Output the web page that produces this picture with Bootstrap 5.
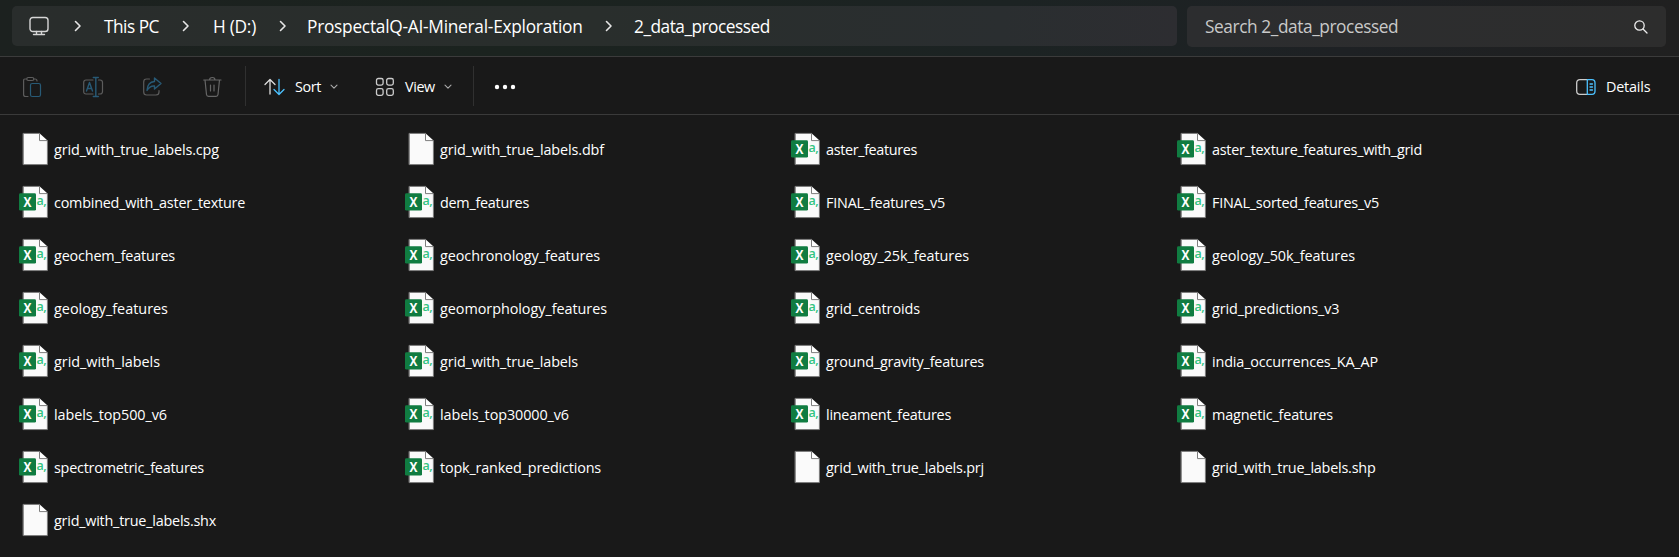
<!DOCTYPE html>
<html lang="en">
<head>
<meta charset="utf-8">
<title>2_data_processed</title>
<link href="https://cdn.jsdelivr.net/npm/bootstrap@5.3.0/dist/css/bootstrap.min.css" rel="stylesheet">
<style>
body{background:#191919;color:#fff;font-family:"Open Sans","Noto Sans",sans-serif;font-size:14px;line-height:20px;width:1679px;height:557px;overflow:hidden}
svg{display:block;flex:none;fill:none;stroke-linecap:round;stroke-linejoin:round}
.top-strip{height:57px;padding:6px 13px 0 12px;gap:10px;background:linear-gradient(90deg,#1c211f 0,#1b231f 30%,#1c2323 60%,#1e2124 80%,#202020 100%);border-bottom:1px solid #3b3b3b}
.address{width:1165px;height:40px;border-radius:5px;padding-left:17px;background:linear-gradient(90deg,#292d2c,#292e2c 50%,#2a2e30 85%,#2d2d31);display:grid;grid-template-columns:45px 30px 78px 31px 66px 28px 298px 29px auto;align-items:center;justify-content:start;font-size:17.3px;white-space:nowrap;letter-spacing:-.25px}
.address span{padding-top:1px}
.address .short-name{letter-spacing:-.5px}
.search-box{height:41px;border-radius:5px;padding:0 18px;background:linear-gradient(90deg,#2c2d2f,#2d2d2d);font-size:17.3px;color:#c9c9c9;letter-spacing:-.42px}
.tools{height:58px;border-bottom:1px solid #3a3a3a;font-size:14.4px;letter-spacing:-.4px}
.tools span{padding-top:3px}
.tools svg{margin-top:2px}
.tool-slot{width:60px;padding-left:23px}
.rule-v{width:1px;height:40px;background:#303030}
.files{display:grid;grid-template-columns:repeat(4,386px);grid-auto-rows:53px;padding:8px 0 0 18px}
.files svg{margin-top:-2px}
.file-name{margin-left:6px;font-size:14.4px;white-space:nowrap}
</style>
</head>
<body>
<svg width="0" height="0" class="position-absolute">
<symbol id="blank" viewBox="0 0 30 34"><path d="M5.4 1.4H21.5L29.4 9V32.6H5.4Z" fill="#fafafa" stroke="#7d7d7d" stroke-width=".9"/><path d="M21.5 1.4V8.6H29.4" fill="#fff" stroke="#7d7d7d"/></symbol>
<symbol id="chev" viewBox="0 0 8 12"><path d="M1.5 1.5 6 6 1.5 10.5" stroke="#e6e6e6" stroke-width="1.6"/></symbol>
<symbol id="down" viewBox="0 0 8 6"><path d="M1 1.2 4 4.2 7 1.2" stroke="#aaa" stroke-width="1.1"/></symbol>
</svg>
<header class="top-strip d-flex">
<nav class="address">
<svg width="20" height="20" viewBox="0 0 20 20" stroke="#d6d6d6" stroke-width="1.4"><rect x="1" y="1.5" width="18" height="14" rx="2.8"/><path d="M7.5 15.5V18M12.5 15.5V18M4.5 18.5H15.5"/></svg>
<svg width="8" height="12"><use href="#chev"/></svg><span class="short-name">This PC</span>
<svg width="8" height="12"><use href="#chev"/></svg><span>H (D:)</span>
<svg width="8" height="12"><use href="#chev"/></svg><span>ProspectalQ-AI-Mineral-Exploration</span>
<svg width="8" height="12"><use href="#chev"/></svg><span class="short-name">2_data_processed</span>
</nav>
<div class="search-box flex-grow-1 d-flex align-items-center justify-content-between"><span>Search 2_data_processed</span>
<svg width="14" height="14" viewBox="0 0 14 14" stroke="#eee" stroke-width="1.3"><circle cx="5.5" cy="5.5" r="4.7"/><path d="M9 9 13 13"/></svg></div>
</header>
<div class="tools d-flex align-items-center">
<div class="tool-slot"><svg width="20" height="22" viewBox="1 0 20 22" stroke="#5c5c5c" stroke-width="1.2"><path d="M4.5 3H2.8Q1.6 3 1.6 4.8V18.5Q1.6 20.5 3.5 20.5H6M11.5 3H13Q15 3 15 5"/><rect x="4.8" y="1.5" width="7" height="3" rx="1.5"/><rect x="8.5" y="7.5" width="10" height="13" rx="1.8" stroke="#285a76"/></svg></div>
<div class="tool-slot"><svg width="22" height="22" viewBox="1.5 0 22 22" stroke="#5c5c5c" stroke-width="1.2"><path d="M11.5 18H4.5Q2.2 18 2.2 15.5V6.5Q2.2 4 4.5 4H11.5M17 4H18.5Q21 4 21 6.5V15.5Q21 18 18.5 18H17"/><path d="M5 15 8 6.5 11 15M6 12.5H10M14.3 1.5V20.5M11.8 1.5H16.8M11.8 20.5H16.8" stroke="#285a76" stroke-width="1.4"/></svg></div>
<div class="tool-slot"><svg width="20" height="20" viewBox="0.5 0 20 20" stroke="#5c5c5c" stroke-width="1.2"><path d="M7 2H4Q1.2 2 1.2 5V15Q1.2 18 4 18H13.5Q16.5 18 16.5 15V13.5"/><path d="M12 1 18.5 6.5 12 12V9Q7.5 8.5 4.5 13.5Q5 5 12 4.5Z" stroke="#285a76" stroke-width="1.4"/></svg></div>
<div class="tool-slot"><svg width="20" height="22" viewBox="0.5 0 20 22" stroke="#666" stroke-width="1.2"><path d="M1.2 4H18.5M7 4Q7 1.5 9.8 1.5Q12.5 1.5 12.5 4M2.5 4 4 18.5Q4.2 20.3 6 20.3H13.5Q15.3 20.3 15.5 18.5L17 4M8 9V15M11.5 9V15"/></svg></div>
<div class="rule-v" style="margin-left:5px"></div>
<svg width="21" height="18" viewBox="0 0 21 18" style="margin-left:18px" stroke="#ddd" stroke-width="1.3"><path d="M6 16V1.5M1 6.5 6 1.5 11 6.5"/><path d="M15 1.5V16M10 11.5 15 16.5 20 11.5" stroke="#4cc2ff"/></svg>
<span style="margin-left:10px;width:35px">Sort</span><svg width="8" height="6"><use href="#down"/></svg>
<svg width="20" height="20" viewBox="0 0 20 20" style="margin-left:37px" stroke="#ccc" stroke-width="1.3"><rect x="1.5" y="1.5" width="6.6" height="6.6" rx="1.8"/><rect x="11.7" y="1.5" width="6.6" height="6.6" rx="1.8"/><rect x="1.5" y="11.7" width="6.6" height="6.6" rx="1.8"/><rect x="11.7" y="11.7" width="6.6" height="6.6" rx="1.8"/></svg>
<span style="margin-left:10px;width:39px">View</span><svg width="8" height="6"><use href="#down"/></svg>
<div class="rule-v" style="margin-left:21px"></div>
<svg width="22" height="6" viewBox="0 0 22 6" style="margin-left:20px"><g fill="#fff"><circle cx="3" cy="3" r="2.2"/><circle cx="11" cy="3" r="2.2"/><circle cx="19" cy="3" r="2.2"/></g></svg>
<div class="ms-auto d-flex align-items-center" style="width:104px"><svg width="22" height="18" viewBox="0 0 22 18" stroke="#ccc" stroke-width="1.3"><path d="M12 1.7H5Q1.7 1.7 1.7 5V13Q1.7 16.3 5 16.3H12"/><path d="M12.3 1.7H17Q20 1.7 20 5V13Q20 16.3 17 16.3H12.3ZM15 6H17.5M15 9H17.5M15 12H17.5" stroke="#4cc2ff"/></svg><span style="margin-left:9px;letter-spacing:-.2px">Details</span></div>
</div>
<main class="files" id="files"></main>
<script src="https://cdn.jsdelivr.net/npm/bootstrap@5.3.0/dist/js/bootstrap.bundle.min.js"></script>
<script>
// name:label width in px
const names = `grid_with_true_labels.cpg:165 grid_with_true_labels.dbf:164 aster_features:91 aster_texture_features_with_grid:210
combined_with_aster_texture:191 dem_features:89 FINAL_features_v5:119 FINAL_sorted_features_v5:167
geochem_features:121 geochronology_features:160 geology_25k_features:143 geology_50k_features:143
geology_features:114 geomorphology_features:167 grid_centroids:94 grid_predictions_v3:127.5
grid_with_labels:106 grid_with_true_labels:138 ground_gravity_features:158 india_occurrences_KA_AP:166
labels_top500_v6:113 labels_top30000_v6:129 lineament_features:125 magnetic_features:121
spectrometric_features:150 topk_ranked_predictions:161 grid_with_true_labels.prj:158 grid_with_true_labels.shp:163.5
grid_with_true_labels.shx:162`.split(/\s+/).map(s => s.split(':'));
const badge = `<rect x="1" y="8.2" width="17" height="17.4" rx="1.4" fill="#107c41"/><text transform="translate(9.5 21.6) scale(.88 1)" text-anchor="middle" font-family="Open Sans" font-weight="700" font-size="13.5" fill="#fff">X</text><text x="18.6" y="20.4" font-family="Open Sans" font-weight="600" font-size="12.5" letter-spacing="-.5" fill="#33c481">a,</text>`;
document.getElementById('files').innerHTML = names.map(([n, w]) =>
  `<div class="d-flex align-items-center"><svg width="30" height="34" viewBox="0 0 30 34"><use href="#blank"/>${n.includes('.') ? '' : badge}</svg><span class="file-name" data-w="${w}">${n}</span></div>`).join('');
document.querySelectorAll('.file-name').forEach(e => {
  e.style.letterSpacing = (e.dataset.w - e.getBoundingClientRect().width) / e.textContent.length + 'px';
});
</script>
</body>
</html>
